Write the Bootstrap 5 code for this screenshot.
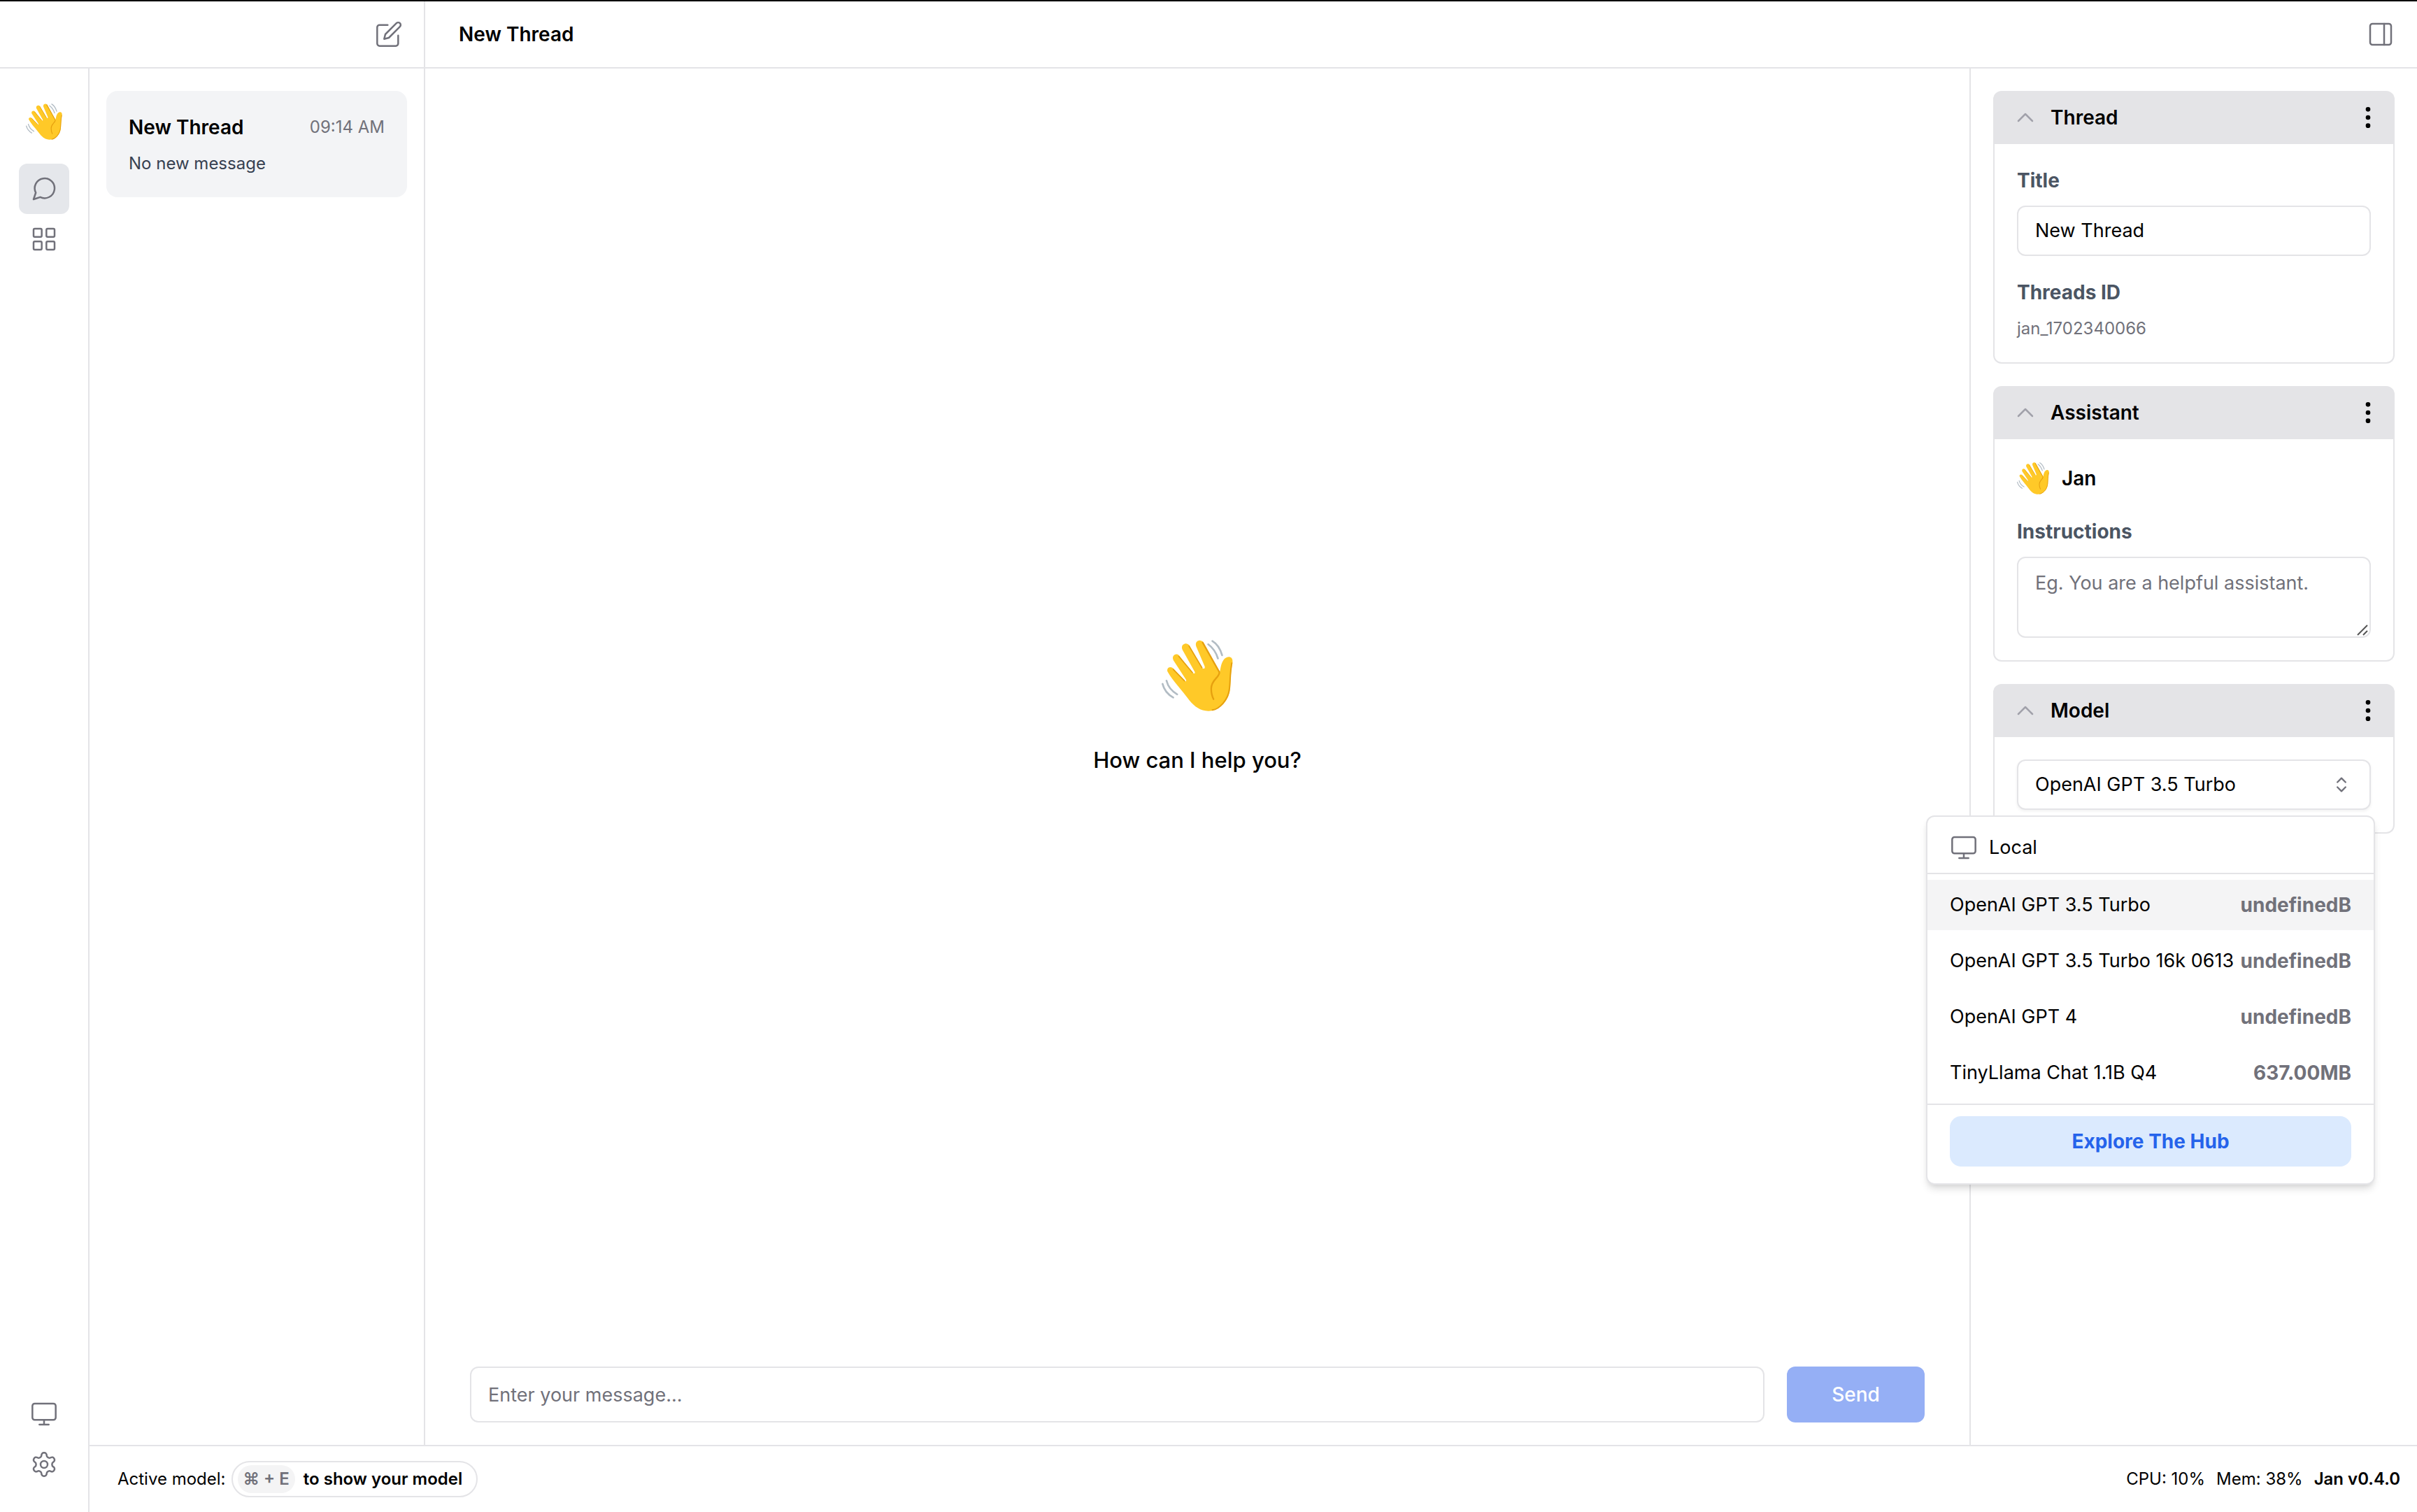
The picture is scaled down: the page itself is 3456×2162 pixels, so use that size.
<!DOCTYPE html>
<html lang="en">
<head>
<meta charset="utf-8">
<meta name="viewport" content="width=device-width, initial-scale=1">
<title>Jan - New Thread</title>
<link href="https://cdn.jsdelivr.net/npm/bootstrap@5.3.0/dist/css/bootstrap.min.css" rel="stylesheet">
<style>
  :root { --line: #e4e4e7; --muted: #71717a; --label: #4b5563; }
  body { font-family: Inter, "Noto Sans", sans-serif; font-size: 28px; line-height: 40px; color: #000; background: #fff; }
  .app { border-top: 2px solid #000; }
  .line-b { border-bottom: 2px solid var(--line); }
  .line-t { border-top: 2px solid var(--line); }
  .line-e { border-right: 2px solid var(--line); }
  .line-s { border-left: 2px solid var(--line); }
  .ico { width: 40px; height: 40px; fill: none; stroke: var(--muted); stroke-width: 1.5; stroke-linecap: round; stroke-linejoin: round; flex: none; display: block; }
  .plain { border: 0; background: none; padding: 0; color: inherit; }
  .text-s { font-size: 24px; line-height: 32px; }
  .tone { color: var(--muted); }

  .topbar { height: 96px; }
  .topbar-side { width: 608px; padding-right: 30px; }
  .topbar-main { padding: 0 32px 0 48px; }
  .title-text { font-size: 28px; line-height: 40px; }

  .rail { width: 128px; padding: 50px 0 32px; flex: none; }
  .rail-logo { width: 52px; height: 52px; margin-bottom: 34px; }
  .rail-link { width: 72px; height: 72px; border-radius: 12px; display: flex; align-items: center; justify-content: center; }
  .rail-link.current { background: #e5e7eb; }

  .threads { width: 480px; padding: 32px 24px; flex: none; }
  .thread-item { background: #f3f4f6; border-radius: 16px; padding: 32px; color: #000; text-decoration: none; display: block; }
  .thread-note { color: #374151; }

  .field { border: 2px solid var(--line); border-radius: 12px; padding: 14px 24px; font-size: 27px; line-height: 40px; color: #000; background: #fff; width: 100%; display: block; }
  .field::placeholder { color: var(--muted); opacity: 1; }
  .wave-big { width: 102px; height: 102px; }
  .greet { gap: 48px; font-size: 31px; line-height: 44px; }
  .composer { padding: 28px 64px 32px; gap: 32px; }
  .composer .field { height: 80px; }
  .send-btn { width: 197px; height: 80px; border: 0; border-radius: 12px; background: #95aff5; color: #fff; font-weight: 500; flex: none; }

  .panel-side { width: 640px; padding: 32px; gap: 32px; flex: none; }
  .box-top { background: var(--line); height: 76px; border-radius: 12px 12px 0 0; padding: 0 18px 0 26px; }
  .box-top .fold { stroke: #a1a1aa; }
  .box-top .dots { stroke: #000; stroke-width: 2; fill: #000; }
  .box-main { border: 2px solid var(--line); border-top: 0; border-radius: 0 0 12px 12px; padding: 32px; }
  .field-label { color: var(--label); font-weight: 700; margin-bottom: 16px; display: block; }
  .field + .field-label { margin-top: 32px; }
  .area { height: 116px; padding-top: 16px; resize: vertical; }
  .area::-webkit-resizer { background: none; }
  .grip { position: absolute; right: 4px; bottom: 3px; width: 16px; height: 16px; fill: none; stroke: #555; stroke-width: 2; pointer-events: none; }
  .jan-row { height: 48px; gap: 18px; margin-bottom: 32px; }
  .wave-mid { width: 46px; height: 46px; }
  .picker .field { height: 72px; appearance: none; box-shadow: 0 2px 4px rgba(0,0,0,.06); }
  .picker-ico { width: 28px; height: 28px; stroke-width: 2; position: absolute; right: 28px; top: 22px; pointer-events: none; }
  .picker-menu { position: absolute; top: 80px; right: -6px; width: 642px; z-index: 5; background: #fff; border: 2px solid var(--line); border-radius: 12px; box-shadow: 0 8px 12px -2px rgba(0,0,0,.12), 0 4px 8px -4px rgba(0,0,0,.1); font-size: 27px; }
  .menu-top { padding: 24px 32px 16px; height: 82px; gap: 16px; }
  .menu-rows { padding: 8px 0; gap: 8px; display: flex; flex-direction: column; }
  .menu-row { width: 100%; padding: 16px 32px; display: flex; justify-content: space-between; white-space: nowrap; }
  .menu-row.picked { background: #f4f4f5; }
  .menu-row .tone { font-size: 28px; font-weight: 700; }
  .menu-end { padding: 16px 32px 24px; }
  .hub-btn { width: 100%; height: 72px; border: 0; border-radius: 16px; background: #dbeafe; color: #2563eb; font-size: 28px; font-weight: 700; }

  .statusbar { height: 96px; padding: 0 24px 0 40px; }
  .pill { border: 2px solid var(--line); border-radius: 26px; height: 52px; padding: 0 20px 0 7px; gap: 12px; background: #fff; font-weight: 600; }
  .pill kbd { background: #f4f4f5; color: var(--muted); border-radius: 20px; padding: 4px 8px; font: inherit; }
</style>
<script src="https://cdn.jsdelivr.net/npm/bootstrap@5.3.0/dist/js/bootstrap.bundle.min.js"></script>
</head>
<body>
<svg width="0" height="0" class="position-absolute" aria-hidden="true">
  <symbol id="wave" viewBox="483 104 308 308">
    <path fill="#ffc928" d="M508 240C503 222 524 216 534 228L582 281Q592 286 588 275L534 192C523 172 547 157 559 172L616 245Q629 254 626 242L573 147C562 124 590 110 603 128L659 226Q671 232 669 219L632 132C624 107 652 98 663 115L733 243Q735 240 738 222C745 190 758 176 776 177C788 180 790 190 789 202C780 250 782 270 779 312C774 370 730 410 685 411C650 410 625 392 603 365C570 320 530 280 508 240Z"/>
    <g fill="none" stroke="#e6a00f" stroke-width="7" stroke-linecap="round" stroke-linejoin="round">
      <path d="M660 115L732 243C735 265 697 275 697 314C697 340 702 350 707 360"/>
      <path d="M601 130L657 224M557 175L616 245M533 231L582 281" stroke-width="5"/>
      <path d="M786 204C778 250 780 270 776 312C771 366 730 403 702 407" stroke-width="6"/>
    </g>
    <g fill="none" stroke="#b2bcc4" stroke-width="8" stroke-linecap="round">
      <path d="M702 109Q731 126 744 170M684 123Q714 145 726 184M487 294Q496 332 533 353M504 280Q513 317 550 339"/>
    </g>
  </symbol>
  <symbol id="monitor" viewBox="0 0 24 24"><rect x="2" y="3" width="20" height="14" rx="2"/><path d="M8 21h8M12 17v4"/></symbol>
  <symbol id="fold" viewBox="0 0 24 24"><path d="m18 15-6-6-6 6"/></symbol>
  <symbol id="dots" viewBox="0 0 24 24"><circle cx="12" cy="12" r="1"/><circle cx="12" cy="5" r="1"/><circle cx="12" cy="19" r="1"/></symbol>
</svg>

<div class="app d-flex flex-column min-vh-100">
  <header class="topbar line-b d-flex">
    <div class="topbar-side line-e d-flex align-items-center justify-content-end flex-shrink-0">
      <button class="plain" type="button" aria-label="Create thread">
        <svg class="ico" viewBox="0 0 24 24"><path d="M11 4H4a2 2 0 0 0-2 2v14a2 2 0 0 0 2 2h14a2 2 0 0 0 2-2v-7"/><path d="M18.5 2.5a2.12 2.12 0 0 1 3 3L12 15l-4 1 1-4Z"/></svg>
      </button>
    </div>
    <div class="topbar-main d-flex align-items-center justify-content-between flex-grow-1">
      <h1 class="title-text fw-semibold m-0">New Thread</h1>
      <button class="plain" type="button" aria-label="Toggle panel">
        <svg class="ico" viewBox="0 0 24 24"><rect x="3" y="3" width="18" height="18" rx="2"/><path d="M15 3v18"/></svg>
      </button>
    </div>
  </header>

  <div class="d-flex flex-grow-1">
    <nav class="rail line-e d-flex flex-column align-items-center" aria-label="Main">
      <svg class="rail-logo"><use href="#wave"/></svg>
      <a class="rail-link current" href="#" aria-label="Threads">
        <svg class="ico" viewBox="0 0 24 24"><path d="m3 21 1.9-5.7a8.5 8.5 0 1 1 3.8 3.8z"/></svg>
      </a>
      <a class="rail-link" href="#" aria-label="Hub">
        <svg class="ico" viewBox="0 0 24 24"><rect x="3" y="3" width="7" height="7" rx="1"/><rect x="14" y="3" width="7" height="7" rx="1"/><rect x="14" y="14" width="7" height="7" rx="1"/><rect x="3" y="14" width="7" height="7" rx="1"/></svg>
      </a>
      <a class="rail-link mt-auto" href="#" aria-label="System monitor"><svg class="ico"><use href="#monitor"/></svg></a>
      <a class="rail-link" href="#" aria-label="Settings">
        <svg class="ico" viewBox="0 0 24 24"><path d="M12.22 2h-.44a2 2 0 0 0-2 2v.18a2 2 0 0 1-1 1.73l-.43.25a2 2 0 0 1-2 0l-.15-.08a2 2 0 0 0-2.73.73l-.22.38a2 2 0 0 0 .73 2.73l.15.1a2 2 0 0 1 1 1.72v.51a2 2 0 0 1-1 1.74l-.15.09a2 2 0 0 0-.73 2.73l.22.38a2 2 0 0 0 2.73.73l.15-.08a2 2 0 0 1 2 0l.43.25a2 2 0 0 1 1 1.73V20a2 2 0 0 0 2 2h.44a2 2 0 0 0 2-2v-.18a2 2 0 0 1 1-1.73l.43-.25a2 2 0 0 1 2 0l.15.08a2 2 0 0 0 2.73-.73l.22-.39a2 2 0 0 0-.73-2.73l-.15-.08a2 2 0 0 1-1-1.74v-.5a2 2 0 0 1 1-1.74l.15-.09a2 2 0 0 0 .73-2.73l-.22-.38a2 2 0 0 0-2.73-.73l-.15.08a2 2 0 0 1-2 0l-.43-.25a2 2 0 0 1-1-1.73V4a2 2 0 0 0-2-2z"/><circle cx="12" cy="12" r="3"/></svg>
      </a>
    </nav>

    <div class="d-flex flex-column flex-grow-1">
      <div class="d-flex flex-grow-1">
        <section class="threads line-e" aria-label="Threads">
          <a class="thread-item" href="#">
            <span class="d-flex justify-content-between align-items-center">
              <span class="fw-semibold">New Thread</span>
              <span class="text-s tone">09:14 AM</span>
            </span>
            <span class="thread-note text-s d-block mt-3">No new message</span>
          </a>
        </section>

        <main class="d-flex flex-column flex-grow-1">
          <div class="greet d-flex flex-column align-items-center justify-content-center flex-grow-1">
            <svg class="wave-big"><use href="#wave"/></svg>
            <p class="fw-medium m-0">How can I help you?</p>
          </div>
          <form class="composer d-flex">
            <input class="field" type="text" aria-label="Message" placeholder="Enter your message...">
            <button class="send-btn" type="button">Send</button>
          </form>
        </main>

        <aside class="panel-side line-s d-flex flex-column">
          <section>
            <div class="box-top d-flex align-items-center">
              <svg class="ico fold me-3"><use href="#fold"/></svg>
              <h2 class="title-text fw-semibold m-0">Thread</h2>
              <button class="plain ms-auto" type="button" aria-label="Thread options"><svg class="ico dots"><use href="#dots"/></svg></button>
            </div>
            <div class="box-main">
              <label class="field-label" for="title">Title</label>
              <input class="field" id="title" type="text" value="New Thread">
              <div class="field-label">Threads ID</div>
              <div class="text-s tone">jan_1702340066</div>
            </div>
          </section>

          <section>
            <div class="box-top d-flex align-items-center">
              <svg class="ico fold me-3"><use href="#fold"/></svg>
              <h2 class="title-text fw-semibold m-0">Assistant</h2>
              <button class="plain ms-auto" type="button" aria-label="Assistant options"><svg class="ico dots"><use href="#dots"/></svg></button>
            </div>
            <div class="box-main">
              <div class="jan-row d-flex align-items-center">
                <svg class="wave-mid"><use href="#wave"/></svg>
                <span class="fw-semibold">Jan</span>
              </div>
              <label class="field-label" for="instructions">Instructions</label>
              <div class="position-relative">
                <textarea class="field area" id="instructions" placeholder="Eg. You are a helpful assistant."></textarea>
                <svg class="grip" viewBox="0 0 16 16" aria-hidden="true"><path d="M1 15 15 1M9 15l6-6"/></svg>
              </div>
            </div>
          </section>

          <section>
            <div class="box-top d-flex align-items-center">
              <svg class="ico fold me-3"><use href="#fold"/></svg>
              <h2 class="title-text fw-semibold m-0">Model</h2>
              <button class="plain ms-auto" type="button" aria-label="Model options"><svg class="ico dots"><use href="#dots"/></svg></button>
            </div>
            <div class="box-main">
              <div class="picker position-relative">
                <select class="field" aria-label="Model">
                  <option>OpenAI GPT 3.5 Turbo</option>
                </select>
                <svg class="ico picker-ico" viewBox="0 0 24 24"><path d="m7 15 5 5 5-5M7 9l5-5 5 5"/></svg>
                <div class="picker-menu">
                  <div class="menu-top line-b d-flex align-items-center">
                    <svg class="ico"><use href="#monitor"/></svg><span>Local</span>
                  </div>
                  <div class="menu-rows line-b">
                    <button class="plain menu-row picked" type="button"><span>OpenAI GPT 3.5 Turbo</span><span class="tone">undefinedB</span></button>
                    <button class="plain menu-row" type="button"><span>OpenAI GPT 3.5 Turbo 16k 0613</span><span class="tone">undefinedB</span></button>
                    <button class="plain menu-row" type="button"><span>OpenAI GPT 4</span><span class="tone">undefinedB</span></button>
                    <button class="plain menu-row" type="button"><span>TinyLlama Chat 1.1B Q4</span><span class="tone">637.00MB</span></button>
                  </div>
                  <div class="menu-end"><button class="hub-btn" type="button">Explore The Hub</button></div>
                </div>
              </div>
            </div>
          </section>
        </aside>
      </div>

      <footer class="statusbar line-t text-s d-flex align-items-center justify-content-between">
        <div class="d-flex align-items-center gap-2">
          <span>Active model:</span>
          <span class="pill d-flex align-items-center"><kbd>⌘ + E</kbd><span>to show your model</span></span>
        </div>
        <div class="d-flex gap-3">
          <span>CPU: 10%</span><span>Mem: 38%</span><span class="fw-semibold">Jan v0.4.0</span>
        </div>
      </footer>
    </div>
  </div>
</div>
</body>
</html>
